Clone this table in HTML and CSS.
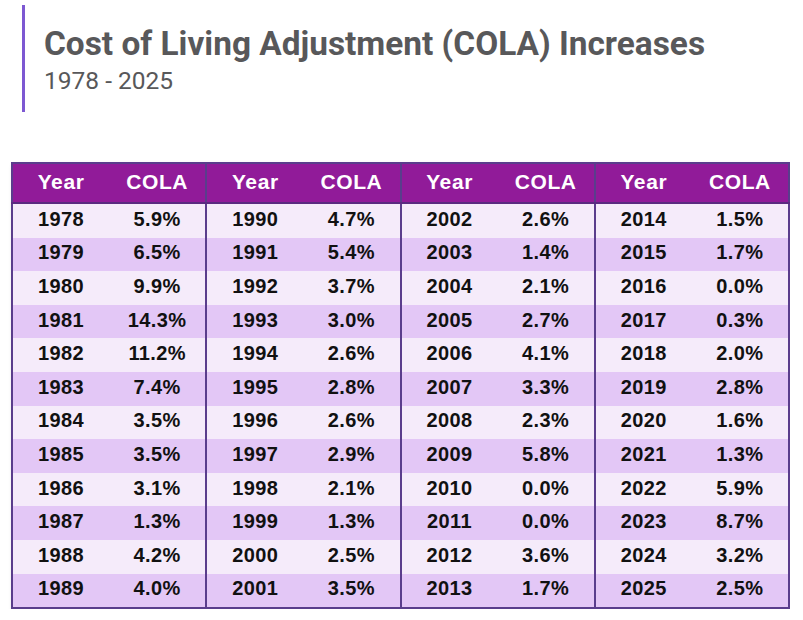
FILE: index.html
```html
<!DOCTYPE html>
<html>
<head>
<meta charset="utf-8">
<link rel="stylesheet" href="styles.css">
</head>
<body>
<header class="head">
  <h1 class="title">Cost of Living Adjustment (COLA) Increases</h1>
  <p class="sub">1978 - 2025</p>
</header>
<table class="cola">
  <thead>
    <tr>
      <th>Year</th><th>COLA</th>
      <th class="grp">Year</th><th>COLA</th>
      <th class="grp">Year</th><th>COLA</th>
      <th class="grp">Year</th><th>COLA</th>
    </tr>
  </thead>
  <tbody>
    <tr><td>1978</td><td>5.9%</td><td class="grp">1990</td><td>4.7%</td><td class="grp">2002</td><td>2.6%</td><td class="grp">2014</td><td>1.5%</td></tr>
    <tr><td>1979</td><td>6.5%</td><td class="grp">1991</td><td>5.4%</td><td class="grp">2003</td><td>1.4%</td><td class="grp">2015</td><td>1.7%</td></tr>
    <tr><td>1980</td><td>9.9%</td><td class="grp">1992</td><td>3.7%</td><td class="grp">2004</td><td>2.1%</td><td class="grp">2016</td><td>0.0%</td></tr>
    <tr><td>1981</td><td>14.3%</td><td class="grp">1993</td><td>3.0%</td><td class="grp">2005</td><td>2.7%</td><td class="grp">2017</td><td>0.3%</td></tr>
    <tr><td>1982</td><td>11.2%</td><td class="grp">1994</td><td>2.6%</td><td class="grp">2006</td><td>4.1%</td><td class="grp">2018</td><td>2.0%</td></tr>
    <tr><td>1983</td><td>7.4%</td><td class="grp">1995</td><td>2.8%</td><td class="grp">2007</td><td>3.3%</td><td class="grp">2019</td><td>2.8%</td></tr>
    <tr><td>1984</td><td>3.5%</td><td class="grp">1996</td><td>2.6%</td><td class="grp">2008</td><td>2.3%</td><td class="grp">2020</td><td>1.6%</td></tr>
    <tr><td>1985</td><td>3.5%</td><td class="grp">1997</td><td>2.9%</td><td class="grp">2009</td><td>5.8%</td><td class="grp">2021</td><td>1.3%</td></tr>
    <tr><td>1986</td><td>3.1%</td><td class="grp">1998</td><td>2.1%</td><td class="grp">2010</td><td>0.0%</td><td class="grp">2022</td><td>5.9%</td></tr>
    <tr><td>1987</td><td>1.3%</td><td class="grp">1999</td><td>1.3%</td><td class="grp">2011</td><td>0.0%</td><td class="grp">2023</td><td>8.7%</td></tr>
    <tr><td>1988</td><td>4.2%</td><td class="grp">2000</td><td>2.5%</td><td class="grp">2012</td><td>3.6%</td><td class="grp">2024</td><td>3.2%</td></tr>
    <tr><td>1989</td><td>4.0%</td><td class="grp">2001</td><td>3.5%</td><td class="grp">2013</td><td>1.7%</td><td class="grp">2025</td><td>2.5%</td></tr>
  </tbody>
</table>
</body>
</html>
```
FILE: styles.css
```css
html, body {
  margin: 0;
  padding: 0;
  background: #ffffff;
}
body {
  padding: 5px 0 0 11px;
  width: 779px;
}
.head {
  margin-left: 11px;
  border-left: 3px solid #7d58d2;
  padding: 20px 0 0 19px;
  height: 87px;
  font-family: Roboto, "Liberation Sans", sans-serif;
  color: #58585a;
}
.title {
  margin: 0;
  font-size: 33.4px;
  line-height: 38px;
  font-weight: 700;
}
.sub {
  margin: 4px 0 0;
  font-size: 24.5px;
  line-height: 28px;
  font-weight: 400;
}
.cola {
  margin-top: 50px;
  width: 779px;
  border-collapse: collapse;
  table-layout: fixed;
  font-family: "Liberation Sans", Arial, sans-serif;
  font-weight: 700;
  text-align: center;
  border: 2px solid #5a3d8c;
  box-shadow: 2px 3px 4px rgba(0,0,0,0.25);
}
.cola th {
  background: #911b99;
  color: #ffffff;
  font-size: 21px;
  letter-spacing: 0.6px;
  height: 36px;
  padding: 0 0 2px;
  border-bottom: 2px solid #5a2a80;
}
.cola td {
  height: 30.6px;
  padding: 0 0 3px;
  font-size: 20px;
  letter-spacing: 0.4px;
  color: #111111;
}
.cola tbody tr:nth-child(odd) td {
  background: #f5ebfa;
}
.cola tbody tr:nth-child(even) td {
  background: #e3c7f6;
}
.cola .grp {
  border-left: 2px solid #5a3d8c;
}
```
